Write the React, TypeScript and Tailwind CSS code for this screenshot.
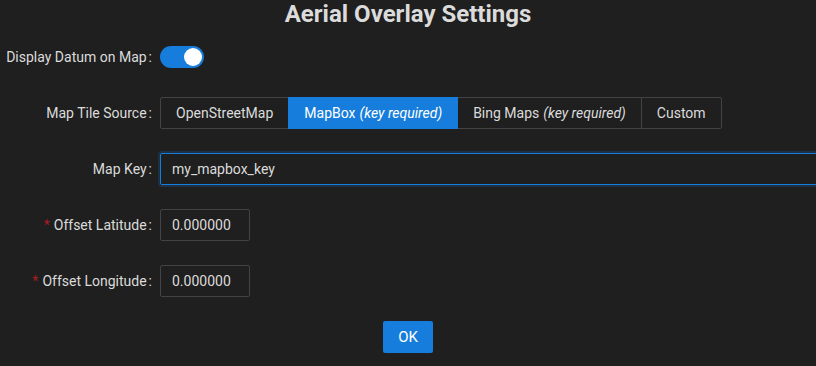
import React, { useEffect, useRef, useState } from "react";

const sources = [
  { key: "osm", label: "OpenStreetMap" },
  { key: "mapbox", label: "MapBox", note: "(key required)" },
  { key: "bing", label: "Bing Maps", note: "(key required)" },
  { key: "custom", label: "Custom" },
];

const Label = ({ text, required }: { text: string; required?: boolean }) => (
  <div className="w-[160px] shrink-0 flex justify-end items-center text-[14px] text-[#dbdbdb] whitespace-nowrap">
    {required && <span className="text-[#a61d24] mr-1 text-[14px]">*</span>}
    <span>{text}</span>
    <span className="ml-[2px] mr-[8px]">:</span>
  </div>
);

export default function App() {
  const [showDatum, setShowDatum] = useState(true);
  const [source, setSource] = useState("mapbox");
  const keyRef = useRef<HTMLInputElement>(null);

  useEffect(() => {
    const el = keyRef.current;
    if (el) {
      el.focus({ preventScroll: true });
      el.setSelectionRange(el.value.length, el.value.length);
    }
  }, []);

  return (
    <div
      className="w-screen h-screen overflow-clip bg-[#1f1f1f] text-[#dbdbdb]"
      style={{ fontFamily: "Roboto, 'Liberation Sans', sans-serif" }}
    >
      <h1 className="text-center text-[24px] font-bold leading-[28px] text-[#dbdbdb]">
        Aerial Overlay Settings
      </h1>

      <div className="mt-[13px] flex flex-col gap-[24px]">
        <div className="flex items-center h-[32px]">
          <Label text="Display Datum on Map" />
          <button
            onClick={() => setShowDatum(!showDatum)}
            className={`relative w-[44px] h-[22px] rounded-full ${
              showDatum ? "bg-[#177ddc]" : "bg-[#4d4d4d]"
            }`}
          >
            <span
              className={`absolute top-[2px] w-[18px] h-[18px] rounded-full bg-white ${
                showDatum ? "left-[24px]" : "left-[2px]"
              }`}
            />
          </button>
        </div>

        <div className="flex items-center h-[32px]">
          <Label text="Map Tile Source" />
          <div className="flex h-[32px]">
            {sources.map((s, i) => {
              const active = s.key === source;
              return (
                <button
                  key={s.key}
                  onClick={() => setSource(s.key)}
                  className={`h-[32px] px-[15px] text-[14px] border whitespace-nowrap ${
                    i > 0 ? "-ml-px" : ""
                  } ${i === 0 ? "rounded-l-[2px]" : ""} ${
                    i === sources.length - 1 ? "rounded-r-[2px]" : ""
                  } ${
                    active
                      ? "bg-[#177ddc] border-[#177ddc] text-white relative z-10"
                      : "bg-[#1f1f1f] border-[#434343] text-[#dbdbdb]"
                  }`}
                >
                  {s.label}
                  {s.note && <i className="ml-1">{s.note}</i>}
                </button>
              );
            })}
          </div>
        </div>

        <div className="flex items-center h-[32px]">
          <Label text="Map Key" />
          <input
            ref={keyRef}
            defaultValue="my_mapbox_key"
            className="w-[720px] shrink-0 h-[32px] px-[11px] text-[14px] bg-transparent text-[#dbdbdb] caret-[#dbdbdb] border border-[#177ddc] rounded-[2px] outline-none shadow-[0_0_0_2px_rgba(23,125,220,0.2)]"
          />
        </div>

        <div className="flex items-center h-[32px]">
          <Label text="Offset Latitude" required />
          <input
            defaultValue="0.000000"
            className="w-[90px] h-[32px] px-[11px] text-[14px] bg-transparent text-[#dbdbdb] border border-[#434343] rounded-[2px] outline-none"
          />
        </div>

        <div className="flex items-center h-[32px]">
          <Label text="Offset Longitude" required />
          <input
            defaultValue="0.000000"
            className="w-[90px] h-[32px] px-[11px] text-[14px] bg-transparent text-[#dbdbdb] border border-[#434343] rounded-[2px] outline-none"
          />
        </div>

        <div className="flex justify-center">
          <button className="h-[32px] w-[50px] text-[15px] text-white bg-[#177ddc] rounded-[2px]">
            OK
          </button>
        </div>
      </div>
    </div>
  );
}
